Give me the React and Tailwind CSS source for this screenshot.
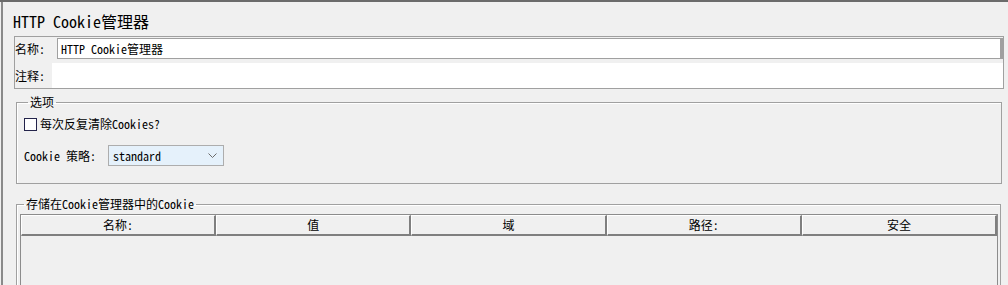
import React from 'react';

const font = "font-['Noto_Sans_Mono_CJK_SC','Liberation_Mono','Noto_Sans_CJK_SC',monospace]";

const columns = ['名称:', '值', '域', '路径:', '安全'];

const App = () => {
  return (
    <div className={`w-[1008px] h-[285px] overflow-hidden bg-[#f0f0f0] border-t-2 border-[#6b6b6b] pl-px text-black ${font}`}>
      <div className="h-full border-l-2 border-[#8a8a8a] flex flex-col">
        {/* Title */}
        <div className="mt-[9px] pl-[10px] h-[20px] leading-[20px] text-[16px]">HTTP Cookie管理器</div>

        {/* Name / comment */}
        <div className="mt-[5px] ml-[11px] w-[990px] border border-[#a0a0a0] pt-px flex flex-col text-[12px]">
          <div className="flex items-center h-[21px]">
            <span className="w-[42px] shrink-0">名称:</span>
            <div className="flex-1 h-full bg-white border border-[#a0a0a0] border-r-[3px] flex items-center pl-[3px]">
              HTTP Cookie管理器
            </div>
          </div>
          <div className="flex items-center h-[25px] mt-[4px]">
            <span className="w-[37px] shrink-0">注释:</span>
            <div className="flex-1 h-full bg-white" />
          </div>
        </div>

        {/* Options */}
        <fieldset className="mt-[5px] ml-[13px] w-[986px] border border-[#a0a0a0] shadow-[inset_1px_1px_0_#fff] px-[7px] pb-[17px] text-[12px]">
          <legend className="ml-[4px] px-[2px] leading-[16px]">选项</legend>
          <div className="flex items-center h-[16px] mt-[6px]">
            <span className="w-[13px] h-[13px] border border-[#23234a] bg-white shrink-0" />
            <span className="ml-[3px]">每次反复清除Cookies?</span>
          </div>
          <div className="flex items-center mt-[13px] h-[21px]">
            <span className="w-[84px] shrink-0">Cookie 策略:</span>
            <div className="w-[116px] h-full bg-[#e5f1fb] border border-[#adadad] flex items-center justify-between pl-[4px] pr-[6px]">
              <span>standard</span>
              <svg width="9" height="5" viewBox="0 0 9 5" fill="none">
                <polyline points="0.5,0.5 4.5,4.5 8.5,0.5" stroke="#6b6b6b" strokeWidth="1" />
              </svg>
            </div>
          </div>
        </fieldset>

        {/* Stored cookies */}
        <fieldset className="mt-[12px] ml-[13px] w-[985px] flex-1 border border-[#a0a0a0] shadow-[inset_1px_1px_0_#fff] pl-[3px] pr-[2px] text-[12px]">
          <legend className="ml-[4px] px-[2px] leading-[16px]">存储在Cookie管理器中的Cookie</legend>
          <div className="mt-[2px] h-[200px] border-l border-r border-t border-[#8c8c8c]">
            <div className="grid grid-cols-5 h-[20px]">
              {columns.map((c) => (
                <div
                  key={c}
                  className="flex items-center justify-center border-t border-l border-t-white border-l-white border-r-2 border-b-2 border-r-[#7f7f7f] border-b-[#7f7f7f] bg-[#f0f0f0]"
                >
                  {c}
                </div>
              ))}
            </div>
          </div>
        </fieldset>
      </div>
    </div>
  );
};

export default App;
